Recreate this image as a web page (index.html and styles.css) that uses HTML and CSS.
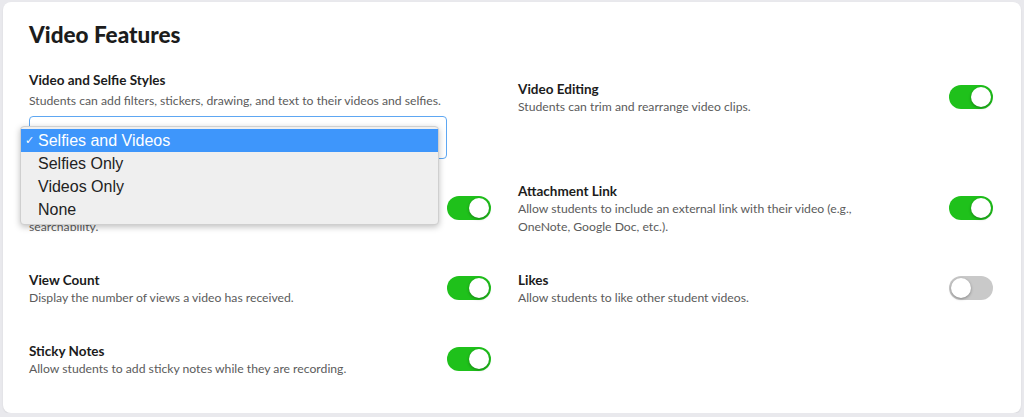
FILE: index.html
```html
<!DOCTYPE html>
<html lang="en">
<head>
    <meta charset="UTF-8">
    <title>Video Features</title>
    <link rel="stylesheet" href="styles.css">
</head>
<body>
    <div class="card">
        <h1 class="card-title">Video Features</h1>
        <div class="features">
            <div class="feature feature-styles">
                <div class="feature-text">
                    <div class="feature-name">Video and Selfie Styles</div>
                    <div class="feature-desc wide">Students can add filters, stickers, drawing, and text to their videos and selfies.</div>
                </div>
                <div class="select-wrap">
                    <div class="select"></div>
                    <ul class="menu">
                        <li class="on"><span class="check">&#10003;</span>Selfies and Videos</li>
                        <li>Selfies Only</li>
                        <li>Videos Only</li>
                        <li>None</li>
                    </ul>
                </div>
            </div>
            <div class="feature feature-top">
                <div class="feature-text">
                    <div class="feature-name">Video Editing</div>
                    <div class="feature-desc">Students can trim and rearrange video clips.</div>
                </div>
                <span class="toggle on"></span>
            </div>

            <div class="feature">
                <div class="feature-text">
                    <div class="feature-name hidden">Video Tags</div>
                    <div class="feature-desc"><span class="hidden">Allow students to add tags to their videos for easier</span><br>searchability.</div>
                </div>
                <span class="toggle on"></span>
            </div>
            <div class="feature">
                <div class="feature-text">
                    <div class="feature-name">Attachment Link</div>
                    <div class="feature-desc">Allow students to include an external link with their video (e.g., OneNote, Google Doc, etc.).</div>
                </div>
                <span class="toggle on"></span>
            </div>

            <div class="feature">
                <div class="feature-text">
                    <div class="feature-name">View Count</div>
                    <div class="feature-desc">Display the number of views a video has received.</div>
                </div>
                <span class="toggle on"></span>
            </div>
            <div class="feature">
                <div class="feature-text">
                    <div class="feature-name">Likes</div>
                    <div class="feature-desc">Allow students to like other student videos.</div>
                </div>
                <span class="toggle"></span>
            </div>

            <div class="feature">
                <div class="feature-text">
                    <div class="feature-name">Sticky Notes</div>
                    <div class="feature-desc">Allow students to add sticky notes while they are recording.</div>
                </div>
                <span class="toggle on"></span>
            </div>
        </div>
    </div>
</body>
</html>
```

FILE: styles.css
```css
*{margin: 0; padding: 0; box-sizing: border-box;}
body {
    background: #e9e9ed;
    font-family: "Lato", "Open Sans", sans-serif;
    color: #1c1c1c;
}
.card {
    margin: 2px 3px 0;
    height: 411px;
    background: #fff;
    border-radius: 8px;
    box-shadow: 0 1px 2px rgba(0, 0, 0, 0.08);
    padding: 19px 28px 0 26px;
}
.card-title {
    font-size: 22.5px;
    font-weight: 900;
    line-height: 28px;
}
.features {
    display: grid;
    grid-template-columns: 462px 475px;
    column-gap: 27px;
    row-gap: 35px;
    margin-top: 22px;
}
.feature {
    display: flex;
    align-items: center;
    justify-content: space-between;
}
.feature-styles {
    display: block;
    margin-bottom: -12px;
}
.feature-top {
    align-self: start;
    margin-top: 9px;
}
.feature-name {
    font-size: 13.5px;
    font-weight: 700;
    line-height: 18px;
}
.feature-desc {
    font-size: 12.2px;
    line-height: 18px;
    color: #5b5b5b;
    max-width: 360px;
}
.feature-desc.wide {
    max-width: none;
    margin-top: 3px;
}
.hidden {
    visibility: hidden;
}
.select-wrap {
    position: relative;
    margin-top: 6px;
}
.select {
    width: 418px;
    height: 43px;
    border: 1px solid #5ea7f2;
    border-radius: 4px;
}
.menu {
    position: absolute;
    left: -9px;
    top: 10px;
    width: 419px;
    list-style: none;
    background: #efefef;
    border: 1px solid #cfcfcf;
    border-radius: 4px;
    box-shadow: 0 2px 6px rgba(0, 0, 0, 0.25);
    padding: 2px 0 3px;
    font-family: "Liberation Sans", Arial, sans-serif;
    font-size: 16px;
    color: #222;
}
.menu li {
    height: 23px;
    line-height: 23px;
    padding-left: 17px;
    position: relative;
}
.menu li.on {
    background: #3e96fb;
    color: #fff;
}
.check {
    position: absolute;
    left: 4px;
    font-size: 11px;
}
.toggle {
    flex: none;
    position: relative;
    width: 44px;
    height: 24px;
    border-radius: 12px;
    background: #c9c9c9;
    margin-top: -2px;
}
.toggle::after {
    content: "";
    position: absolute;
    top: 2px;
    left: 2px;
    width: 20px;
    height: 20px;
    border-radius: 50%;
    background: #fff;
    box-shadow: 0 1px 3px rgba(0, 0, 0, 0.35);
}
.toggle.on {
    background: #1fc11b;
}
.toggle.on::after {
    left: 22px;
}
```
